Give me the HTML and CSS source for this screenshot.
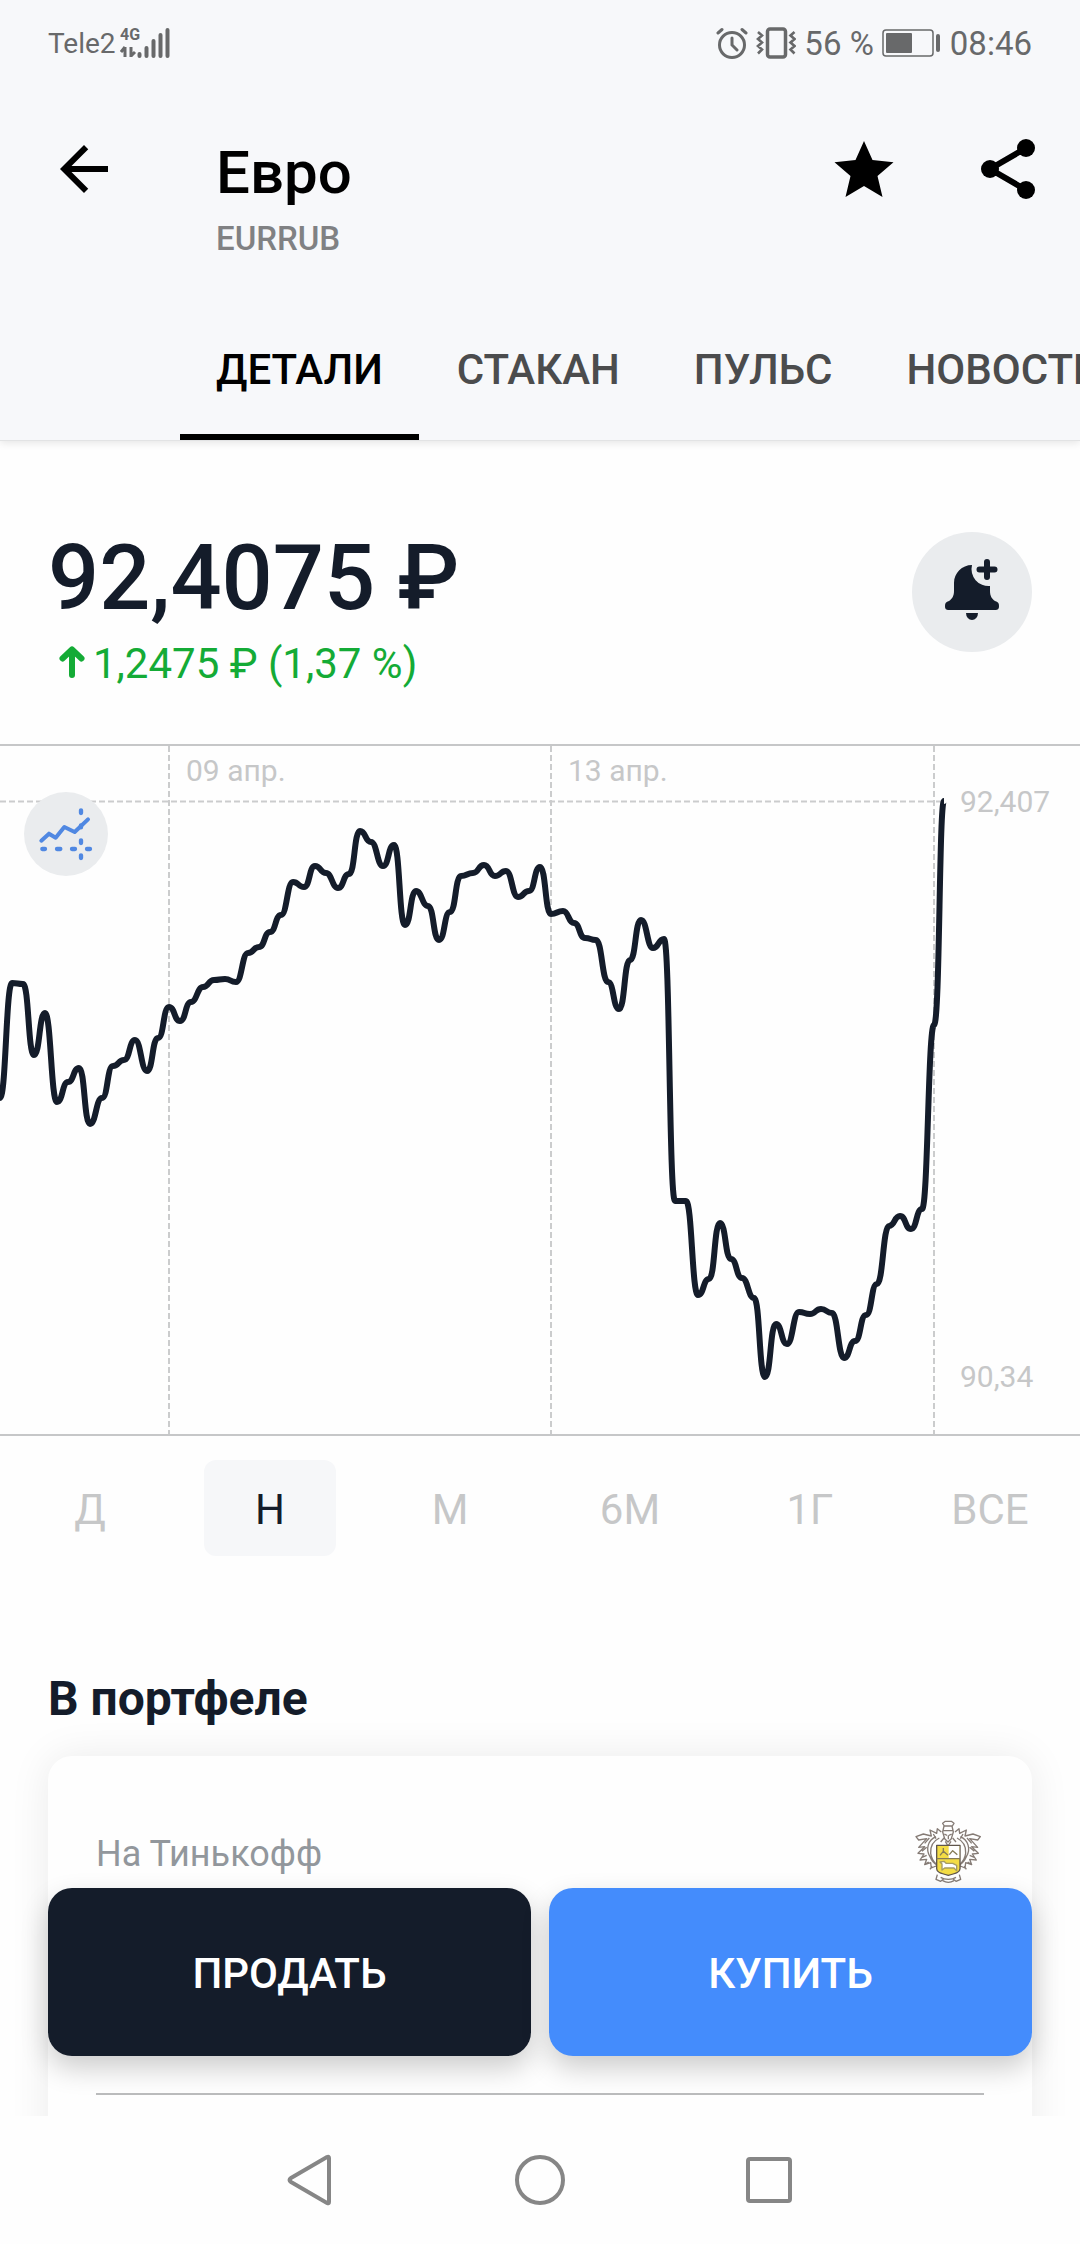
FILE: index.html
```html
<!DOCTYPE html>
<html lang="ru">
<head>
<meta charset="utf-8">
<meta name="viewport" content="width=device-width, initial-scale=1">
<title>Евро — EURRUB</title>
<link rel="stylesheet" href="styles.css">
</head>
<body>
<div class="app">
  <header class="header">
    <div class="status">
      <div class="status-group status-network">
        <span class="carrier">Tele2</span>
        <svg class="signal" width="52" height="32" viewBox="0 0 52 32" aria-label="4G">
          <text x="0" y="13" class="signal-label">4G</text>
          <path d="M5 30V20M5 20L1 25M11 20v10M11 29l4-4" fill="none" stroke="currentColor" stroke-width="3"/>
          <path d="M19.500 27v2M26.500 21v8M33.500 14v15M40.500 8v21M47.500 3v26" fill="none" stroke="currentColor" stroke-width="4" stroke-linecap="round"/>
        </svg>
      </div>
      <div class="status-group">
        <svg width="32" height="32" viewBox="0 0 32 32" fill="none" stroke="currentColor" stroke-linecap="round" aria-hidden="true">
          <circle cx="16" cy="18" r="12.500" stroke-width="3"/>
          <path d="M16 11v7l5 5M2 6l4-3.500M30 6l-4-3.500" stroke-width="3"/>
        </svg>
        <svg class="vibrate" width="40" height="32" viewBox="0 0 40 32" fill="none" stroke="currentColor" aria-hidden="true">
          <rect x="11.500" y="2" width="18" height="28" rx="2.500" stroke-width="3.500"/>
          <path d="M2 5l4 3.500-4 3.500 4 3.500-4 3.500 4 3.500-4 4M38.500 5l-4 3.500 4 3.500-4 3.500 4 3.500-4 3.500 4 4" stroke-width="2.600"/>
        </svg>
        <span>56 %</span>
        <svg class="battery" width="60" height="28" viewBox="0 0 60 28" aria-hidden="true">
          <rect x="1" y="1" width="50" height="26" rx="3" fill="none" stroke="currentColor" stroke-width="1.500"/>
          <rect x="4" y="4" width="26" height="20" rx="1" fill="currentColor"/>
          <rect x="54" y="5" width="4" height="18" rx="2" fill="currentColor"/>
        </svg>
        <span>08:46</span>
      </div>
    </div>

    <div class="appbar">
      <button class="icon-button" type="button" aria-label="Назад">
        <svg width="72" height="72" viewBox="0 0 24 24"><path d="M20 11H7.830l5.590-5.590L12 4l-8 8 8 8 1.410-1.410L7.830 13H20v-2z"/></svg>
      </button>
      <div class="title-block">
        <h1 class="title">Евро</h1>
        <p class="ticker">EURRUB</p>
      </div>
      <div class="appbar-actions">
        <button class="icon-button" type="button" aria-label="В избранное">
          <svg width="72" height="72" viewBox="0 0 72 72"><path d="M36 8l8.500 19 21 2.200L49.500 43 54.500 64 36 53 17.500 64l5-21L6.500 29.200l21-2.200z"/></svg>
        </button>
        <button class="icon-button" type="button" aria-label="Поделиться">
          <svg width="72" height="72" viewBox="0 0 72 72"><path d="M54 15L18 36l36 21" fill="none" stroke="#000" stroke-width="6"/><circle cx="54" cy="15" r="9"/><circle cx="18" cy="36" r="9"/><circle cx="54" cy="57" r="9"/></svg>
        </button>
      </div>
    </div>

    <nav class="tabs">
      <a class="tab tab-active" href="#details" aria-current="page">ДЕТАЛИ</a>
      <a class="tab" href="#book">СТАКАН</a>
      <a class="tab" href="#pulse">ПУЛЬС</a>
      <a class="tab" href="#news">НОВОСТИ</a>
    </nav>
  </header>

  <main class="content" id="details">
    <section class="summary">
      <div>
        <p class="price">92,4075 ₽</p>
        <p class="change">
          <svg width="32" height="36" viewBox="0 0 32 36" aria-hidden="true"><path d="M16 29V4M6.500 12.500L16 3.500l9.500 9" fill="none" stroke="currentColor" stroke-width="6" stroke-linecap="round" stroke-linejoin="round"/></svg>
          <span>1,2475 ₽ (1,37 %)</span>
        </p>
      </div>
      <button class="bell" type="button" aria-label="Добавить уведомление">
        <svg width="120" height="120" viewBox="0 0 120 120" fill="#141c2a">
          <path d="M60 33C50 33 42 41 42 51v8c0 5-2 8-5 10-3 1-4 2-4 5s1 4 4 4h46c3 0 4-1 4-4s-1-4-4-5c-3-2-5-5-5-10v-5A17 17 0 0 1 60 33z"/>
          <path d="M54 81h12a6 7 0 0 1-12 0z"/>
          <path d="M75 30v15M67.500 37.500h15" stroke="#141c2a" stroke-width="6" stroke-linecap="round"/>
        </svg>
      </button>
    </section>

    <section class="chart">
      <svg class="chart-plot" viewBox="0 0 1080 692" role="img" aria-label="График курса за неделю">
        <path class="chart-border" d="M0 1H1080M0 691H1080"/>
        <path class="chart-grid" d="M169 2V690M551 2V690M934 2V690M0 57.500H944"/>
        <path class="chart-line" d="M0 354C6 354 6 239 12 239S17 240 23 240 28 311 34 311 39 269 45 269 51 358 57 358 62 338 68 338 73 324 79 324 84 380 90 380 96 354 102 354 107 322 113 322 118 316 124 316 129 296 135 296 141 327 147 327 152 294 158 294 163 263 169 263 174 277 180 277 185 258 191 258 197 243 203 243 208 236 214 236 219 235 225 235 230 238 236 238 242 209 248 209 253 203 259 203 264 188 270 188 275 171 281 171 287 138 293 138 298 143 304 143 309 122 315 122 320 129 326 129 332 144 338 144 343 130 349 130 354 87 360 87 365 98 371 98 377 122 383 122 388 101 394 101 399 181 405 181 410 147 416 147 422 162 428 162 433 196 439 196 444 168 450 168 455 132 461 132 467 129 473 129 478 121 484 121 489 132 495 132 500 127 506 127 512 153 518 153 523 147 529 147 534 123 540 123 545 170 551 170 557 167 563 167 568 179 574 179 579 194 585 194 590 196 596 196 602 238 608 238 613 265 619 265 624 216 630 216 635 176 641 176 647 204 653 204 658 195 664 195 669 457 675 457 680 457 686 457 692 551 698 551 703 535 709 535 714 479 720 479 725 515 731 515 736 534 742 534 748 554 754 554 759 633 765 633 770 580 776 580 781 600 787 600 793 568 799 568 804 570 810 570 815 565 821 565 826 569 832 569 838 614 844 614 849 597 855 597 860 571 866 571 871 540 877 540 883 482 889 482 894 472 900 472 905 485 911 485 916 465 922 465 928 281 934 281 939 57 944 57"/>
        <g class="chart-label">
          <text x="186" y="37">09 апр.</text>
          <text x="568" y="37">13 апр.</text>
          <text x="960" y="68">92,407</text>
          <text x="960" y="643">90,34</text>
        </g>
      </svg>
      <button class="chart-mode" type="button" aria-label="Режим графика">
        <svg width="84" height="84" viewBox="0 0 252 252" fill="none" stroke="#5088e2" stroke-linecap="round" aria-hidden="true">
          <path d="M52 146l23-21 20 12 26-32 31 15 40-38" stroke-width="12" stroke-linejoin="round"/>
          <path d="M55 171h8M99 171h10M144 171h9M189 171h9M171 55v8M171 100v6M171 145v8M171 190v8" stroke-width="13"/>
        </svg>
      </button>
    </section>

    <div class="periods">
      <button class="period" type="button">Д</button>
      <button class="period period-active" type="button" aria-pressed="true">Н</button>
      <button class="period" type="button">М</button>
      <button class="period" type="button">6М</button>
      <button class="period" type="button">1Г</button>
      <button class="period" type="button">ВСЕ</button>
    </div>

    <section class="portfolio">
      <h2 class="section-title">В портфеле</h2>
      <div class="card">
        <div class="account">
          <span>На Тинькофф</span>
          <svg width="72" height="72" viewBox="0 0 216 216" fill="none" stroke="#857b75" stroke-width="4" stroke-linejoin="round" aria-hidden="true">
            <path d="M92 22l8-6h18l8 6-5 8H97zM96 30h24l4 18-6 20-10 10-10-10-6-20zM92 44h32M97 54l8 4M119 54l-8 4M109 58v12M96 66l-10 12M122 66l10 12M100 76l8 14 9-14"/>
            <g id="mantle">
              <path d="M88 48l-12-10-2 14-20-10 4 18-24-6-22 8 8 10 24-4-24 26 18-2-20 20 18 2-12 18 20-2-6 16 18-6 2 16 14-6 8 10M72 62c-24 10-32 38-18 60 5 12 12 20 22 26M82 66c-20 10-28 24-26 46 2 14 8 24 16 32M52 66L38 82M64 54l8 14M44 94l-14 12M44 118l-14 6M50 138l-12 8M60 150l-6 10"/>
            </g>
            <use href="#mantle" transform="translate(217 0) scale(-1 1)"/>
            <path d="M74 88h70v70c0 10-10 14-35 20-25-6-35-10-35-20z" fill="#f3dc45" stroke="#5f554c"/>
            <path d="M110 90h32v38h-32z" fill="#fff" stroke="none"/>
            <path d="M74 128h70M84 118l10-12 14 12M94 106V96M112 116l10-12 14 12" stroke="#857b55"/>
            <path d="M90 162v-18l-6-6 12-2 6 6h20l12 6v16l-8-8H98z" fill="#fff" stroke="#a59c62"/>
            <path d="M76 176l-4 14 14 6 8-6M142 176l4 14-14 6-8-6M86 184c12 8 34 8 46 0M92 194c10 6 24 6 34 0"/>
          </svg>
        </div>
        <hr class="divider">
      </div>
    </section>

    <div class="trade">
      <button class="trade-button sell" type="button">ПРОДАТЬ</button>
      <button class="trade-button buy" type="button">КУПИТЬ</button>
    </div>
  </main>

  <footer class="system-nav">
    <button class="icon-button" type="button" aria-label="Назад"><svg width="56" height="56" viewBox="0 0 56 56"><path d="M46 6v44Q46 52 44 51L8 30Q5 28 8 26L44 5Q46 4 46 6z"/></svg></button>
    <button class="icon-button" type="button" aria-label="Домой"><svg width="56" height="56" viewBox="0 0 56 56"><circle cx="28" cy="28" r="23"/></svg></button>
    <button class="icon-button" type="button" aria-label="Недавние"><svg width="56" height="56" viewBox="0 0 56 56"><rect x="7" y="7" width="42" height="42" rx="2"/></svg></button>
  </footer>
</div>
</body>
</html>
```
FILE: styles.css
```css
* {
  box-sizing: border-box;
}

body,
h1,
h2,
p {
  margin: 0;
}

body {
  font-family: Roboto, "Noto Sans", sans-serif;
  color: #141c2a;
  background: #fefefe;
}

button {
  border: 0;
  padding: 0;
  background: none;
  font: inherit;
  color: inherit;
}

svg {
  display: block;
  flex: none;
}

.app {
  display: flex;
  flex-direction: column;
  height: 100vh;
}

.header {
  position: relative;
  z-index: 1;
  flex: none;
  overflow: hidden;
  background: #f7f8fa;
  border-bottom: 1px solid #e2e3e4;
  box-shadow: 0 2px 8px rgba(0, 0, 0, 0.1);
}

.status {
  display: flex;
  justify-content: space-between;
  height: 86px;
  padding: 0 48px;
  font-size: 33px;
  color: #68696a;
}

.status-group {
  display: flex;
  align-items: center;
  gap: 8px;
}

.status-network {
  gap: 4px;
}

.carrier {
  font-size: 28px;
}

.signal-label {
  font-size: 16px;
  font-weight: 700;
  fill: currentColor;
}

.appbar {
  display: flex;
  align-items: flex-start;
  gap: 96px;
  height: 230px;
  padding: 47px 36px 0 48px;
}

.title-block {
  flex: 1;
  padding-top: 4px;
}

.title {
  font-size: 60px;
  line-height: 72px;
  font-weight: 500;
  color: #000;
}

.ticker {
  margin-top: 10px;
  font-size: 33px;
  line-height: 40px;
  font-weight: 500;
  color: #808183;
}

.appbar-actions {
  display: flex;
  gap: 72px;
}

.tabs {
  display: flex;
  gap: 2px;
  padding-left: 180px;
  white-space: nowrap;
}

.tab {
  flex: none;
  padding: 30px 36px 40px;
  border-bottom: 6px solid transparent;
  font-size: 42px;
  line-height: 48px;
  font-weight: 500;
  color: #4b4c4d;
  text-decoration: none;
}

.tab-active {
  color: #000;
  border-color: #000;
}

.content {
  position: relative;
  flex: 1;
  min-height: 0;
  overflow: hidden;
}

.summary {
  display: flex;
  justify-content: space-between;
  align-items: flex-start;
  padding: 86px 48px 56px;
}

.price {
  font-size: 90px;
  line-height: 104px;
  font-weight: 500;
}

.change {
  display: flex;
  align-items: center;
  gap: 5px;
  margin-top: 9px;
  padding-left: 8px;
  font-size: 42px;
  line-height: 48px;
  color: #14ab36;
}

.bell {
  margin-top: 5px;
  border-radius: 50%;
  background: #eaecee;
}

.chart {
  position: relative;
}

.chart-plot {
  width: 100%;
  height: auto;
}

.chart-border {
  stroke: #c6c7c8;
  stroke-width: 2;
}

.chart-grid {
  stroke: #cbcccd;
  stroke-width: 2;
  stroke-dasharray: 6 3;
}

.chart-line {
  fill: none;
  stroke: #141c2a;
  stroke-width: 6;
  stroke-linejoin: round;
}

.chart-label {
  font-size: 30px;
  fill: #c6c7c8;
}

.chart-mode {
  position: absolute;
  left: 24px;
  top: 48px;
  border-radius: 50%;
  background: #eaecee;
}

.periods {
  display: grid;
  grid-template-columns: repeat(6, 1fr);
  padding: 24px 0;
}

.period {
  margin: 0 24px;
  height: 96px;
  padding-top: 2px;
  border-radius: 12px;
  font-size: 42px;
  color: #c6c7c8;
}

.period-active {
  background: #f6f7f9;
  color: #141c2a;
}

.portfolio {
  padding: 91px 48px 0;
}

.section-title {
  font-size: 48px;
  line-height: 56px;
  font-weight: 700;
}

.card {
  margin-top: 29px;
  height: 480px;
  padding: 60px 48px;
  border-radius: 24px;
  background: #fefefe;
  box-shadow: 0 0 40px rgba(0, 0, 0, 0.08);
}

.account {
  display: flex;
  justify-content: space-between;
  align-items: center;
  font-size: 36px;
  line-height: 42px;
  color: #92979c;
}

.account span {
  padding-top: 3px;
}

.divider {
  height: 2px;
  margin: 205px 0 0;
  border: 0;
  background: #bbbcbd;
}

.trade {
  position: absolute;
  left: 48px;
  right: 48px;
  bottom: 60px;
  display: flex;
  gap: 18px;
}

.trade-button {
  flex: 1;
  height: 168px;
  padding-top: 2px;
  border-radius: 24px;
  font-size: 42px;
  font-weight: 500;
  color: #fff;
  box-shadow: 0 12px 28px rgba(0, 0, 0, 0.2);
}

.sell {
  background: #141c2a;
}

.buy {
  background: #448cfc;
}

.system-nav {
  flex: none;
  display: flex;
  justify-content: center;
  gap: 173px;
  height: 128px;
  background: #fefefe;
}

.system-nav svg {
  fill: none;
  stroke: #868686;
  stroke-width: 4;
}
```
